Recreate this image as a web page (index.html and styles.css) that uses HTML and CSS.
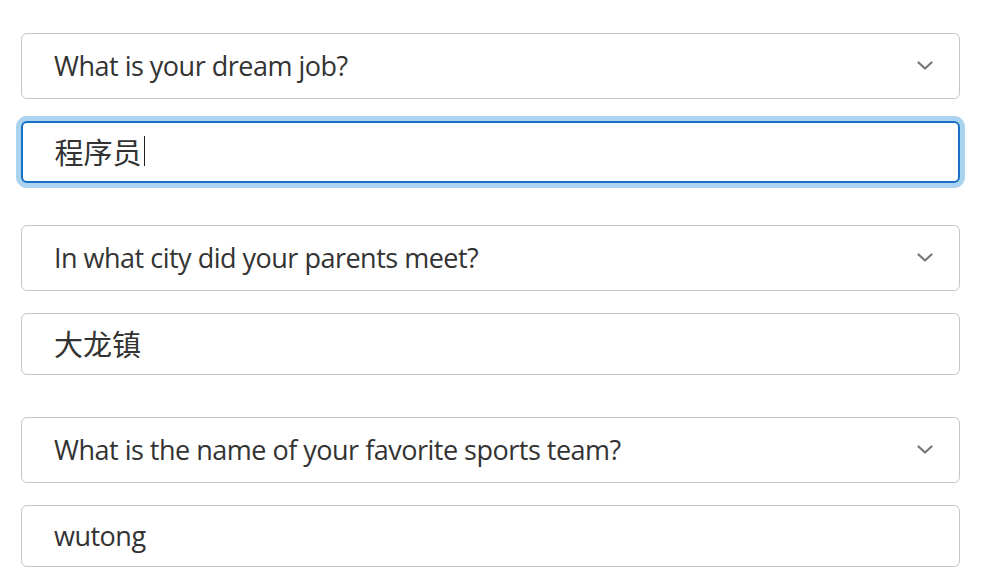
FILE: index.html
```html
<!DOCTYPE html>
<html lang="en">
<head>
<meta charset="utf-8">
<title>Security questions</title>
<link rel="stylesheet" href="styles.css">
</head>
<body>
<div class="form">
  <div class="group">
    <div class="select"><span class="label">What is your dream job?</span><svg class="chev" viewBox="0 0 16 9" width="16" height="9"><path d="M1.5 1.5 L8 7.5 L14.5 1.5" fill="none" stroke="#777" stroke-width="2.2" stroke-linecap="round" stroke-linejoin="round"/></svg></div>
    <div class="field focus"><span class="cjk">程序员</span><span class="caret"></span></div>
  </div>
  <div class="group">
    <div class="select"><span class="label">In what city did your parents meet?</span><svg class="chev" viewBox="0 0 16 9" width="16" height="9"><path d="M1.5 1.5 L8 7.5 L14.5 1.5" fill="none" stroke="#777" stroke-width="2.2" stroke-linecap="round" stroke-linejoin="round"/></svg></div>
    <div class="field"><span class="cjk">大龙镇</span></div>
  </div>
  <div class="group">
    <div class="select"><span class="label">What is the name of your favorite sports team?</span><svg class="chev" viewBox="0 0 16 9" width="16" height="9"><path d="M1.5 1.5 L8 7.5 L14.5 1.5" fill="none" stroke="#777" stroke-width="2.2" stroke-linecap="round" stroke-linejoin="round"/></svg></div>
    <div class="field"><span class="label">wutong</span></div>
  </div>
</div>
</body>
</html>
```
FILE: styles.css
```css
html, body {
  margin: 0;
  padding: 0;
  background: #ffffff;
}
body {
  font-family: "Open Sans", "Noto Sans", "Noto Sans CJK SC", sans-serif;
  color: #333333;
}
.form {
  width: 939px;
  padding: 33px 0 0 21px;
  display: flex;
  flex-direction: column;
  gap: 42px;
}
.group {
  display: flex;
  flex-direction: column;
  gap: 22px;
}
.select, .field {
  box-sizing: border-box;
  border: 1.5px solid #c6c6c6;
  border-radius: 6px;
  display: flex;
  align-items: center;
  padding: 0 26px 2px 32px;
  background: #fff;
}
.select {
  height: 66px;
  justify-content: space-between;
}
.select .chev {
  margin-top: 0;
}
.field {
  height: 62px;
}
.field.focus {
  border: 2px solid #1670c6;
  box-shadow: 0 0 0 5px #a9d3ee;
  padding-left: 31.5px;
}
.label {
  font-size: 27px;
  letter-spacing: -0.5px;
  color: #333;
}
.cjk {
  font-family: "Noto Sans CJK SC", sans-serif;
  font-size: 29px;
  color: #333;
}
.caret {
  display: inline-block;
  width: 1.5px;
  height: 30px;
  background: #222;
  margin-left: 2px;
}
.chev {
  display: block;
  flex: none;
}
```
